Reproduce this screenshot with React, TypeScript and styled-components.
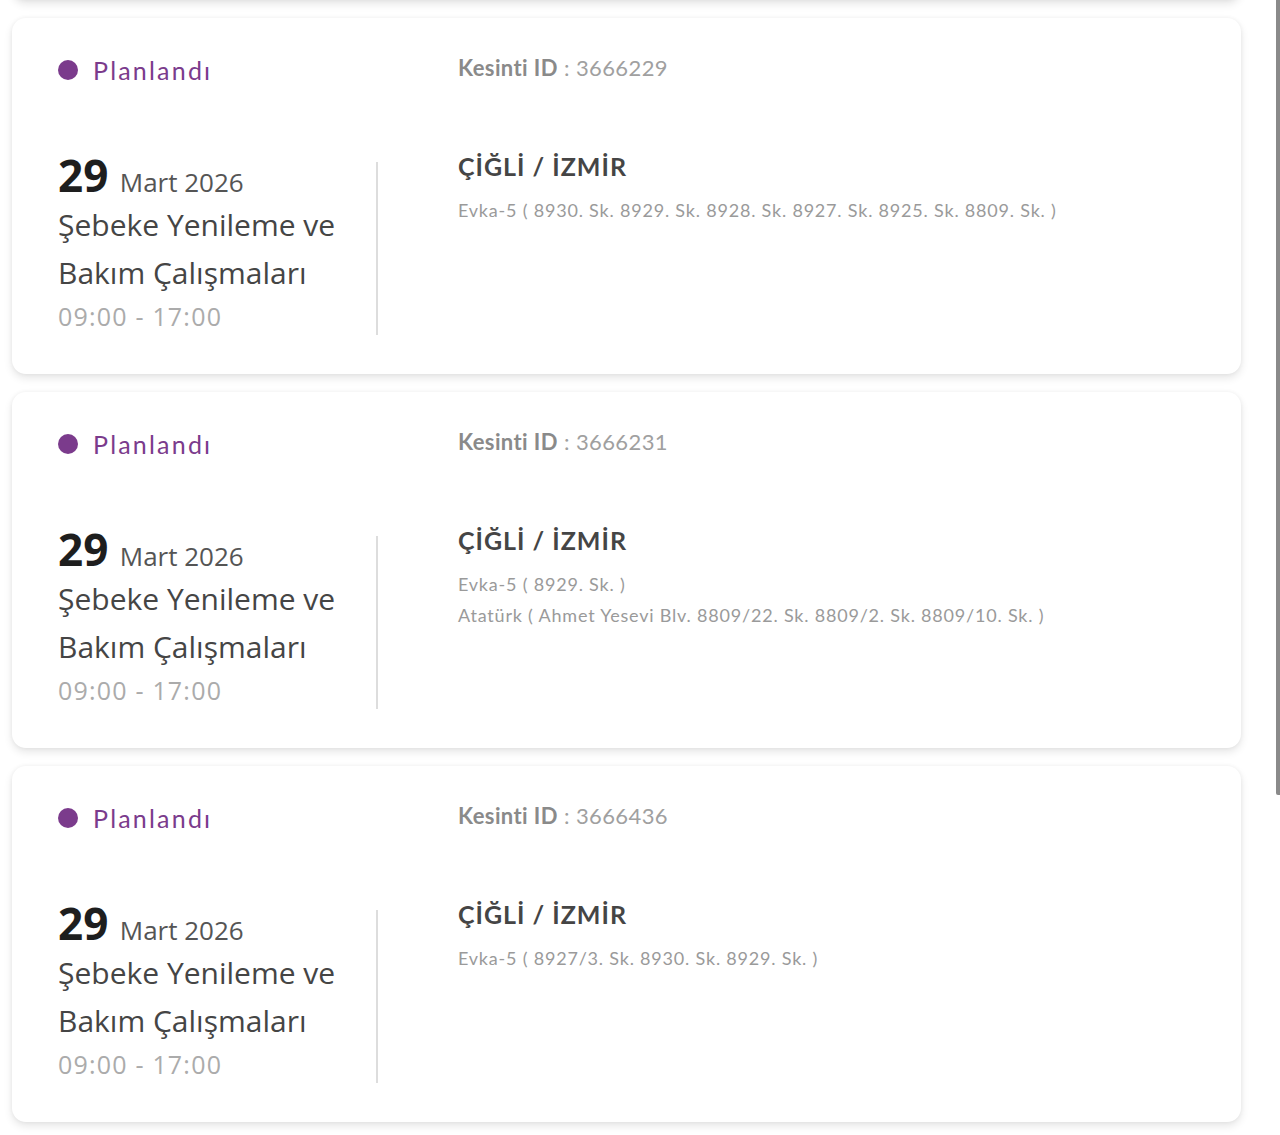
import React from "react"
import styled, { createGlobalStyle } from "styled-components"

type Outage = {
  id: string
  day: string
  monthYear: string
  title: string
  time: string
  district: string
  streets: string[]
}

const outages: Outage[] = [
  {
    id: "3666229",
    day: "29",
    monthYear: "Mart 2026",
    title: "Şebeke Yenileme ve Bakım Çalışmaları",
    time: "09:00 - 17:00",
    district: "ÇİĞLİ / İZMİR",
    streets: ["Evka-5 ( 8930. Sk. 8929. Sk. 8928. Sk. 8927. Sk. 8925. Sk. 8809. Sk. )"],
  },
  {
    id: "3666231",
    day: "29",
    monthYear: "Mart 2026",
    title: "Şebeke Yenileme ve Bakım Çalışmaları",
    time: "09:00 - 17:00",
    district: "ÇİĞLİ / İZMİR",
    streets: [
      "Evka-5 ( 8929. Sk. )",
      "Atatürk ( Ahmet Yesevi Blv. 8809/22. Sk. 8809/2. Sk. 8809/10. Sk. )",
    ],
  },
  {
    id: "3666436",
    day: "29",
    monthYear: "Mart 2026",
    title: "Şebeke Yenileme ve Bakım Çalışmaları",
    time: "09:00 - 17:00",
    district: "ÇİĞLİ / İZMİR",
    streets: ["Evka-5 ( 8927/3. Sk. 8930. Sk. 8929. Sk. )"],
  },
]

const OutageCard = ({ outage }: { outage: Outage }) => (
  <Card>
    <Status>
      <Dot />
      Planlandı
    </Status>
    <OutageId>
      <b>Kesinti ID</b> : {outage.id}
    </OutageId>

    <DateColumn>
      <DateInfo>
        <DateLine>
          <Day>{outage.day} </Day>
          <MonthYear>{outage.monthYear}</MonthYear>
        </DateLine>
        <Title>{outage.title}</Title>
        <Time>{outage.time}</Time>
      </DateInfo>
      <Divider />
    </DateColumn>

    <Location>
      <District>{outage.district}</District>
      {outage.streets.map((s) => (
        <Street key={s}>{s}</Street>
      ))}
    </Location>
  </Card>
)

export default function App() {
  return (
    <>
      <GlobalStyle />
      <Page>
        <List>
          {/* card scrolled out above the viewport, only its shadow shows */}
          <ScrolledCard />
          {outages.map((o) => (
            <OutageCard key={o.id} outage={o} />
          ))}
        </List>
      </Page>
      <ScrollThumb />
    </>
  )
}

const GlobalStyle = createGlobalStyle`
  html, body {
    margin: 0;
    padding: 0;
    background: #ffffff;
    overflow: hidden;
  }
`

const Page = styled.div`
  height: 1135px;
  overflow: hidden;
  padding: 0 39px 0 12px;
`

const List = styled.div`
  display: flex;
  flex-direction: column;
  gap: 18px;
  margin-top: -356px;
`

const Card = styled.div`
  display: grid;
  grid-template-columns: 320px 1fr;
  column-gap: 80px;
  row-gap: 66px;
  padding: 36px 46px 39px;
  background: #ffffff;
  border-radius: 14px;
  box-shadow: 0 4px 8px rgba(0, 0, 0, 0.1), 0 0 4px rgba(0, 0, 0, 0.05);
`

const ScrolledCard = styled(Card)`
  box-sizing: border-box;
  height: 356px;
`

const Status = styled.div`
  display: flex;
  align-items: center;
  gap: 15px;
  margin-top: 2px;
  font-family: Lato, "DejaVu Sans", sans-serif;
  font-size: 25px;
  line-height: 28px;
  letter-spacing: 2.2px;
  color: #7b3b8c;
`

const Dot = styled.span`
  width: 20px;
  height: 20px;
  border-radius: 50%;
  background: #7b3b8c;
`

const OutageId = styled.div`
  font-family: Lato, "DejaVu Sans", sans-serif;
  font-size: 22px;
  line-height: 28px;
  letter-spacing: 0.4px;
  color: #a0a0a0;

  b {
    font-weight: 700;
    color: #8a8a8a;
  }
`

const DateColumn = styled.div`
  display: flex;
`

const DateInfo = styled.div`
  width: 318px;
  padding-bottom: 3px;
  font-family: "Open Sans", "Noto Sans", sans-serif;
`

const DateLine = styled.div`
  height: 50px;
  font-size: 44px;
  line-height: 50px;
  white-space: nowrap;
`

const Day = styled.span`
  font-weight: 700;
  color: #1e1e1e;
`

const MonthYear = styled.span`
  font-size: 26px;
  line-height: 1;
  color: #555555;
`

const Title = styled.div`
  font-size: 30px;
  line-height: 48px;
  color: #454545;
  padding-top: 1px;
  margin-bottom: -1px;
`

const Time = styled.div`
  font-size: 25px;
  line-height: 36px;
  letter-spacing: 1.2px;
  color: #ababab;
  padding-top: 2px;
  margin-bottom: -2px;
`

const Divider = styled.div`
  width: 2px;
  margin-top: 12px;
  background: #dddddd;
`

const Location = styled.div`
  font-family: Lato, "DejaVu Sans", sans-serif;
`

const District = styled.div`
  font-size: 25px;
  line-height: 32px;
  font-weight: 700;
  letter-spacing: 1px;
  color: #454545;
  margin-bottom: 13px;
`

const Street = styled.div`
  font-size: 18px;
  line-height: 31px;
  letter-spacing: 0.8px;
  color: #9a9a9a;
`

const ScrollThumb = styled.div`
  position: fixed;
  top: 0;
  right: 0;
  width: 4px;
  height: 795px;
  background: #8a8a8a;
  border-bottom-left-radius: 2px;
`
